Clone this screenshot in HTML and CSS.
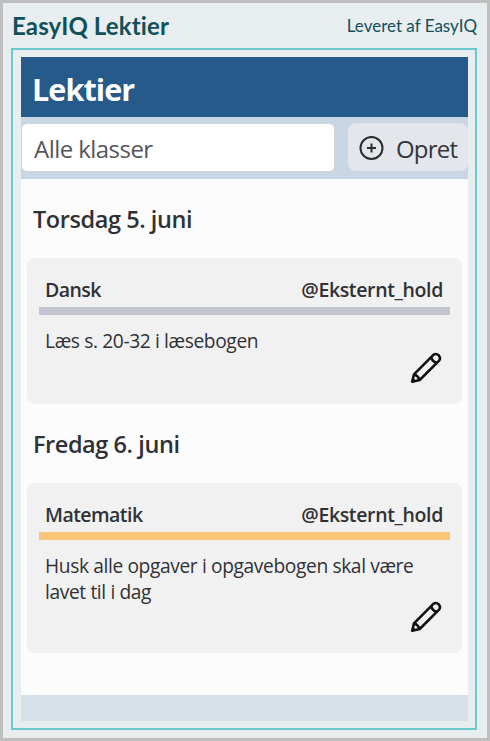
FILE: index.html
```html
<!DOCTYPE html>
<html lang="da">

<head>
    <meta charset="UTF-8">
    <meta name="viewport" content="width=device-width, initial-scale=1.0">
    <title>EasyIQ Lektier</title>
    <link rel="stylesheet" href="styles.css">
</head>

<body>
    <div class="widget">
        <div class="widget-header">
            <h1>EasyIQ Lektier</h1>
            <span class="supplier">Leveret af EasyIQ</span>
        </div>

        <div class="frame">
            <h2>Lektier</h2>

            <div class="toolbar">
                <div class="class-filter">Alle klasser</div>
                <button class="create">
                    <svg width="26" height="26" viewBox="0 0 26 26" fill="none" stroke="#2b2c30" stroke-width="2">
                        <circle cx="12.5" cy="14" r="11" />
                        <path d="M12.5 9.5v9M8 14h9" />
                    </svg>
                    <span>Opret</span>
                </button>
            </div>

            <div class="homework">
                <h3>Torsdag 5. juni</h3>
                <div class="card">
                    <div class="card-header">
                        <span class="subject">Dansk</span>
                        <span class="team">@Eksternt_hold</span>
                    </div>
                    <div class="line danish"></div>
                    <p>Læs s. 20-32 i læsebogen</p>
                    <svg class="edit" width="32" height="32" viewBox="0 0 32 32" fill="none" stroke="#111" stroke-width="2.6" stroke-linejoin="round">
                        <path d="M2.2 29.8L4 22.3L23.4 2.9Q26 .9 28.7 3.3Q31.1 6 29.1 8.6L9.7 28Z" />
                        <path d="M21 5.3Q22.4 9.6 26.7 11M4 22.3Q8 23.7 9.7 28" />
                        <path d="M2.2 29.8L3 26.3L5.7 29Z" fill="#111" stroke-width="1" />
                    </svg>
                </div>

                <h3>Fredag 6. juni</h3>
                <div class="card">
                    <div class="card-header">
                        <span class="subject">Matematik</span>
                        <span class="team">@Eksternt_hold</span>
                    </div>
                    <div class="line maths"></div>
                    <p>Husk alle opgaver i opgavebogen skal være<br>lavet til i dag</p>
                    <svg class="edit" width="32" height="32" viewBox="0 0 32 32" fill="none" stroke="#111" stroke-width="2.6" stroke-linejoin="round">
                        <path d="M2.2 29.8L4 22.3L23.4 2.9Q26 .9 28.7 3.3Q31.1 6 29.1 8.6L9.7 28Z" />
                        <path d="M21 5.3Q22.4 9.6 26.7 11M4 22.3Q8 23.7 9.7 28" />
                        <path d="M2.2 29.8L3 26.3L5.7 29Z" fill="#111" stroke-width="1" />
                    </svg>
                </div>
            </div>

            <div class="footer"></div>
        </div>
    </div>
</body>

</html>
```
FILE: styles.css
```css
* {
    box-sizing: border-box;
}

body {
    margin: 0;
    font-family: "Open Sans", "Noto Sans", sans-serif;
    color: #303136;
}

h1,
h2,
h3,
p {
    margin: 0;
}

.widget {
    width: 490px;
    height: 741px;
    padding: 0 10px 8px 8px;
    border: 3px solid #bfbfbf;
    background-color: #e8edf0;
}

.widget-header {
    display: flex;
    justify-content: space-between;
    align-items: center;
    height: 45px;
    padding-left: 1px;
    font-family: Lato, sans-serif;
    color: #10505a;
    white-space: nowrap;
}

h1 {
    font-size: 24px;
    letter-spacing: 0.12px;
    line-height: 46px;
}

.supplier {
    font-size: 17px;
    line-height: 44px;
}

.frame {
    height: 682px;
    padding: 7px 7px 7px 8px;
    border: 2px solid #6cc8cf;
}

h2 {
    height: 60px;
    padding-left: 11px;
    background-color: #265a8a;
    color: #fff;
    font-size: 30.5px;
    letter-spacing: -0.9px;
    line-height: 65px;
}

.toolbar {
    display: flex;
    justify-content: space-between;
    height: 62px;
    padding: 6px 0 7px 0;
    background-color: #c9d6e4;
    font-size: 24px;
}

.class-filter {
    width: 314px;
    height: 49px;
    padding-left: 12px;
    border: 1px solid #d3d3d8;
    border-radius: 6px;
    background-color: #fff;
    color: #55565b;
    letter-spacing: -0.55px;
    line-height: 50px;
}

.create {
    display: flex;
    align-items: center;
    gap: 11px;
    width: 120px;
    height: 48px;
    padding: 0 0 0 11px;
    border: none;
    border-radius: 8px;
    background-color: #e3e6eb;
    color: #34353b;
    font: inherit;
    letter-spacing: -0.8px;
}

.create span {
    padding-top: 3px;
}

.homework {
    height: 516px;
    padding: 0 6px;
    background-color: #fcfcfc;
}

h3 {
    height: 79px;
    padding-left: 6px;
    font-size: 23.5px;
    font-weight: 600;
    letter-spacing: -0.43px;
    line-height: 81px;
}

.card {
    position: relative;
    height: 146px;
    padding: 17px 12px 0;
    border-radius: 7px;
    background-color: #f1f1f1;
}

.card:last-child {
    height: 170px;
}

.card-header {
    display: flex;
    justify-content: space-between;
    height: 32px;
    padding: 0 7px 0 6px;
    font-size: 19.5px;
    font-weight: 600;
    line-height: 30px;
}

.subject {
    letter-spacing: -0.55px;
}

.team {
    letter-spacing: -0.35px;
}

.line {
    height: 8px;
}

.danish {
    background-color: #c2c4d1;
}

.maths {
    background-color: #fac678;
}

p {
    padding: 13px 6px 0;
    font-size: 19.2px;
    letter-spacing: -0.38px;
    line-height: 26px;
    white-space: nowrap;
}

.edit {
    position: absolute;
    right: 20.5px;
    bottom: 20.5px;
}

.footer {
    height: 26px;
    background-color: #d6e0e9;
}
```
